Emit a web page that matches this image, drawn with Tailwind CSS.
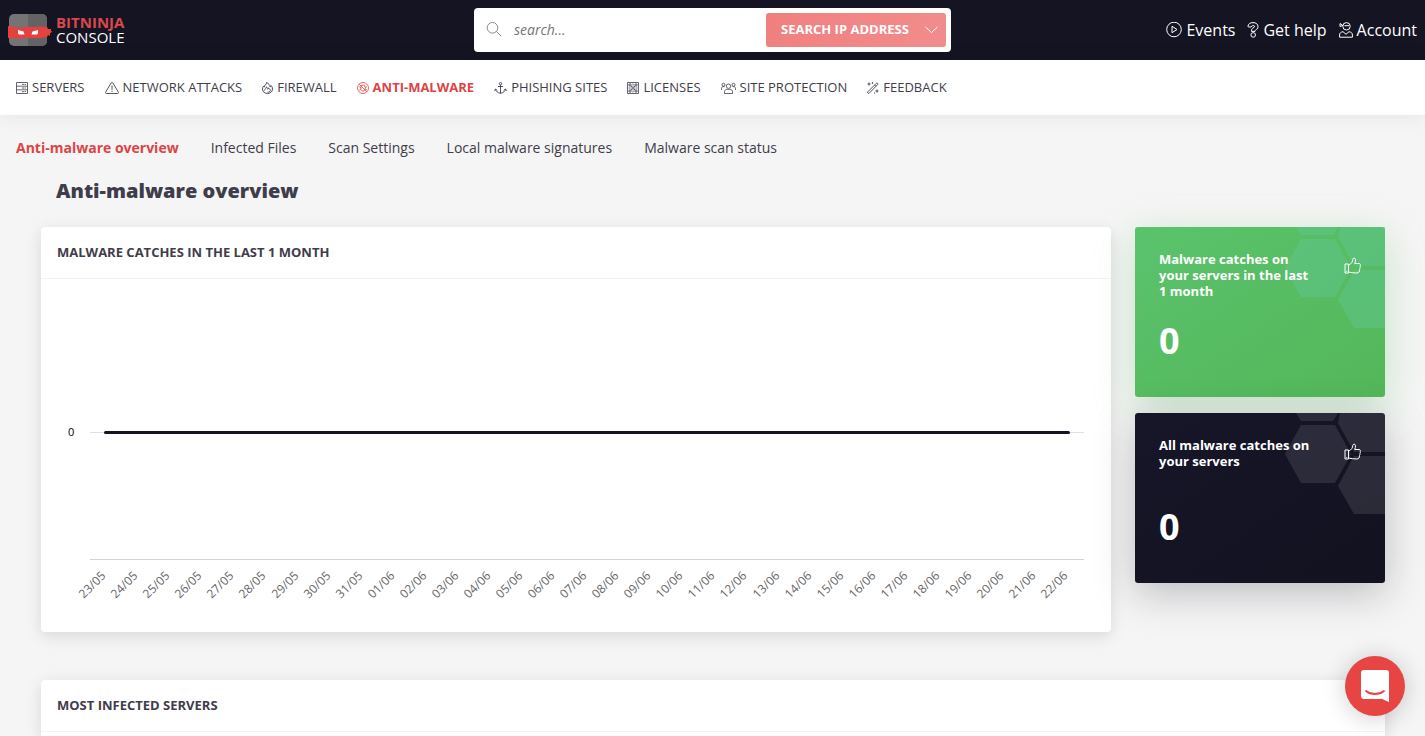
<!DOCTYPE html>
<html lang="en">
<head>
<meta charset="utf-8">
<meta name="viewport" content="width=device-width, initial-scale=1">
<title>BitNinja Console</title>
<script src="https://cdn.jsdelivr.net/npm/@tailwindcss/browser@4"></script>
</head>
<body class="min-h-screen overflow-x-hidden bg-[#f5f5f5] font-['Open_Sans','Noto_Sans',sans-serif] text-[#3f3d4b]">

<header class="grid h-15 grid-cols-[1fr_477px_1fr] items-center bg-[#151423] px-2">
  <a href="#" class="flex items-center gap-1 text-[15px] leading-[15px] text-white">
    <svg class="h-8 w-11 shrink-0" viewBox="0 0 44 32" aria-hidden="true">
      <rect x="1" width="38" height="32" rx="5" fill="#747474"/>
      <path d="M20 0h14a5 5 0 0 1 5 5v22a5 5 0 0 1-5 5H20z" fill="#636363"/>
      <path d="M0 12c7 1.500 13 1.500 19 1 7-.5 14-.5 20 0l1 2h3v2h1l-1 2h-1v3l-2-1-1 2c-7 1.500-12 1-19 1-7 .5-13 .5-20 0z" fill="#e5413f"/>
      <path d="M10 16l5.500 1.500 1 3H11l-1-1zM30 16l-5.500 1.500-1 3H29l1-1z" fill="#fff"/>
    </svg>
    <span><strong class="block font-bold text-[#d8484c]">BITNINJA</strong><span class="block">CONSOLE</span></span>
  </a>
  <form class="flex h-11 items-center rounded bg-white pr-[5px] pl-3" onsubmit="return false">
    <svg class="mr-3 size-4 shrink-0" viewBox="0 0 16 16" fill="none" stroke="#8a8a8a" aria-hidden="true"><circle cx="6.500" cy="5.800" r="5.300"/><path d="M10.500 9.500L15 14"/></svg>
    <input type="search" aria-label="Search" placeholder="search..." class="min-w-0 flex-1 bg-transparent text-sm italic outline-none placeholder:text-[#757575]">
    <button type="button" class="flex h-[34px] w-[180px] items-center justify-between rounded-[3px] bg-linear-to-r from-[#f08080] to-[#f28c8c] pr-2 pl-[15px] text-[13px] font-bold text-white">SEARCH IP ADDRESS
      <svg class="h-2 w-[13px]" viewBox="0 0 13 8" fill="none" stroke="currentColor" aria-hidden="true"><path d="M.5 1l6 5.500L12.500 1"/></svg>
    </button>
  </form>
  <nav aria-label="User" class="flex items-center justify-end gap-3 text-base text-white">
    <a href="#" class="flex items-center gap-1"><svg class="size-4" viewBox="0 0 16 16" fill="none" stroke="currentColor" aria-hidden="true"><circle cx="8" cy="7.500" r="7.300"/><path d="M6 4.300v6.400l5-3.200z" stroke-linejoin="round"/></svg>Events</a>
    <a href="#" class="flex items-center gap-1"><svg class="h-4 w-3" viewBox="0 0 12 16" fill="none" stroke="currentColor" aria-hidden="true"><path d="M1 4.500C1 2 3 .6 6 .6s5 1.500 5 4c0 2-1.500 3-2.500 3.600-.5.300-.5.800-.5 1.200H4.500c0-2 .5-2.900 1.600-3.500C7 5.400 7.600 5 7.600 4.400 7.600 3.300 4.400 3.200 4.200 5H2C1.300 5 1 4.900 1 4.500z"/><circle cx="6.200" cy="12.900" r="2.300"/></svg>Get help</a>
    <a href="#" class="flex items-center gap-1"><svg class="h-4 w-[14px]" viewBox="0 0 14 16" fill="none" stroke="currentColor" aria-hidden="true"><circle cx="7.500" cy="4.300" r="3.700"/><path d="M5.500 3.700h4.500M3.800 3.500L1 1.500v3l2.800-1"/><path d="M.6 15.200v-2.200c0-2 1.300-3 3.400-3.300l3 2.600 3-2.600c2.100.3 3.400 1.300 3.400 3.300v2.200z"/></svg>Account</a>
  </nav>
</header>

<nav aria-label="Main" class="flex h-[55px] items-center gap-5 bg-white px-4 text-[13px] whitespace-nowrap shadow-[0_0_20px_rgba(0,0,0,0.08)]">
  <a href="#" class="flex items-center gap-1"><svg class="h-3 w-3" viewBox="0 0 12 12" fill="none" stroke="currentColor" stroke-width=".8" aria-hidden="true"><path d="M.5.5h11v11H.5zM.5 4.200h11M.5 7.800h11M6 2.400h2.500M6 6h2.500M6 9.700h2.500M9.500 2v1M9.500 5.500v1M9.500 9v1"/></svg>SERVERS</a>
  <a href="#" class="flex items-center gap-1"><svg class="h-3 w-[14px]" viewBox="0 0 14 12" fill="none" stroke="currentColor" stroke-width=".9" stroke-linejoin="round" aria-hidden="true"><path d="M6.200.9L.6 10.200c-.3.600 0 1.300.7 1.300h11.400c.7 0 1-.7.700-1.300L7.800.9c-.4-.6-1.200-.6-1.600 0zM7 3.500v4.300M7 8.800v1.200"/></svg>NETWORK ATTACKS</a>
  <a href="#" class="flex items-center gap-1"><svg class="h-3 w-[11px]" viewBox="0 0 11 12" fill="none" stroke="currentColor" stroke-width=".9" stroke-linejoin="round" aria-hidden="true"><path d="M4.500.5C4.800 3 2 3 2.300 5 1.700 4.800 1.500 4.300 1.500 4 .8 5 .5 6 .5 7c0 2.700 2.200 4.500 5 4.500s5-1.800 5-4.500c0-1.500-.6-2.600-1.500-3.500 0 .8-.3 1.200-.8 1.500C8 3 6.500 1.500 4.500.5z"/><path d="M2.500 8.500C2.500 7 4.300 6.500 4.500 5c1.200.6 1.200 1.500 1.200 2.200.5-.2.700-.6.700-1.200 1.600 1 2 2 2 2.800-.6 1.200-1.500 1.500-2.900 1.500"/></svg>FIREWALL</a>
  <a href="#" aria-current="page" class="flex items-center gap-1 font-bold text-[#dc4446]"><svg class="h-3 w-3" viewBox="0 0 12 12" fill="none" stroke="currentColor" stroke-width=".8" aria-hidden="true"><circle cx="6" cy="6" r="5.500"/><path d="M2.200 2.200l7.600 7.600M4.500 3.200h3l.7 2v2L6.800 9H5.200L3.900 7.400V5.200zM2.200 4.800l1.700.8M2.200 8l1.700-.8M9.900 4.800l-1.700.8M9.900 8l-1.700-.8"/></svg>ANTI-MALWARE</a>
  <a href="#" class="flex items-center gap-1"><svg class="h-3 w-[13px]" viewBox="0 0 13 12" fill="none" stroke="currentColor" stroke-width=".9" aria-hidden="true"><circle cx="6.500" cy="1.700" r="1.200"/><path d="M6.500 3v8.300M4 4.500h5M.5 8.800L1.500 7l1.800 1.500M9.700 8.500L11.500 7l1 1.800M1.500 7.200c.3 2.300 2.300 3.300 5 4.200 2.700-.9 4.700-1.900 5-4.200"/></svg>PHISHING SITES</a>
  <a href="#" class="flex items-center gap-1"><svg class="h-3 w-3" viewBox="0 0 12 12" fill="none" stroke="currentColor" stroke-width=".8" aria-hidden="true"><path d="M.5.500h11v11H.5z"/><path d="M2 2h2v2H2zM8 2h2v2H8zM2 8h2v2H2zM5 5h2v2H5zM8 8h2v2H8zM4 4l1 1M7 7l1 1M8 4L7 5M5 7L4 8M6 1.500v2M6 8.500v2M1.500 6h2M8.500 6h2"/></svg>LICENSES</a>
  <a href="#" class="flex items-center gap-1"><svg class="h-3 w-[15px]" viewBox="0 0 15 12" fill="none" stroke="currentColor" stroke-width=".8" aria-hidden="true"><circle cx="7.500" cy="4.200" r="2.200"/><circle cx="2.500" cy="2.800" r="1.500"/><circle cx="12.500" cy="2.800" r="1.500"/><path d="M3.500 11.500v-1.700c0-1.600 1.300-2.400 2.500-2.600.8.500 2.200.5 3 0 1.200.2 2.500 1 2.500 2.600v1.700zM.5 8V6.500c0-1 .6-1.700 1.500-1.900h1.500M14.500 8V6.500c0-1-.6-1.700-1.500-1.900h-1.500"/></svg>SITE PROTECTION</a>
  <a href="#" class="flex items-center gap-1"><svg class="h-3 w-3" viewBox="0 0 12 12" fill="none" stroke="currentColor" stroke-width=".9" aria-hidden="true"><path d="M.8 9.800L9.400 1.200c.7-.7 2 .5 1.300 1.300L2.200 11.200c-.8.800-2.200-.6-1.400-1.400zM7.500 3l1.500 1.500M2 .5v3M.5 2h3M5.500.3v1.400M4.800 1h1.400M10 7.500v3M8.500 9h3M7.500 10.500v1"/></svg>FEEDBACK</a>
</nav>

<main>
  <nav aria-label="Anti-malware" class="flex items-center gap-8 px-4 pt-[23px] text-sm leading-5 whitespace-nowrap">
    <a href="#" aria-current="page" class="font-bold text-[#dc4446]">Anti-malware overview</a>
    <a href="#">Infected Files</a>
    <a href="#">Scan Settings</a>
    <a href="#">Local malware signatures</a>
    <a href="#">Malware scan status</a>
  </nav>
  <h1 class="mt-[19px] px-14 text-xl leading-7 font-extrabold">Anti-malware overview</h1>

  <div class="mt-[22px] grid grid-cols-[1fr_250px] items-start gap-6 px-10">
    <section class="ml-px rounded bg-white shadow-[0_4px_16px_rgba(0,0,0,0.12)]">
      <h2 class="border-b border-[#f3f3f3] px-4 py-4 text-[13px] leading-[19px] font-bold">MALWARE CATCHES IN THE LAST 1 MONTH</h2>
      <div class="flex h-[353px] gap-4 px-[27px] pt-[10px] text-[11px]">
        <div class="flex h-[270px] items-center pt-4 leading-4 text-black"><span class="w-[6px]">0</span></div>
        <div class="min-w-0 flex-1">
          <div class="flex h-[271px] items-center border-b border-[#cfd3d6] pt-4">
            <div class="flex h-px w-full items-center bg-[#e0e0e0] px-[14px]"><div class="h-[3px] w-full rounded-full bg-[#151423]"></div></div>
          </div>
          <div id="days" class="grid grid-cols-[repeat(31,minmax(0,1fr))] pt-2 text-[#666]"></div>
        </div>
      </div>
    </section>
    <div class="grid gap-4">
      <section class="relative h-[170px] rounded-[3px] bg-linear-to-br from-[#5ac36c] to-[#54b659] text-white shadow-[0_10px_40px_rgba(84,182,89,0.3)]">
        <svg class="absolute top-0 right-0 h-[102px] w-[100px]" viewBox="0 0 100 102" fill="#5fc58d" fill-opacity=".5" aria-hidden="true"><path d="M11 0h42l-5 8H16zM16 12h34l16 29-16 29H16L0 41zM55 0h45v39H69L53 10zM69 43h31v58H69L53 73z"/></svg>
        <div class="relative flex justify-between p-6">
          <div>
            <h2 class="h-12 w-[160px] text-[13px] leading-4 font-bold">Malware catches on<br>your servers in the last<br>1 month</h2>
            <p class="mt-[18px] text-4xl leading-12 font-bold">0</p>
          </div>
          <svg class="mt-[6px] h-[17px] w-[17px]" viewBox="0 0 17 17" fill="none" stroke="#fff" stroke-linejoin="round" aria-hidden="true"><path d="M1 7h3.500v9H1zM2.800 14v1M4.500 8.200C7.500 7 8.700 4.500 8.800 2.300 9 1 11.300.5 11.500 2.500c.2 1.500-.3 2.700-.8 4h4.600c1 0 1.300 1 .8 1.700.6.800.3 1.600-.2 2.100.4.800 0 1.700-.4 2.200.2 2-.8 3.500-2.500 3.500-3 0-5.500-.3-8.500-1z"/></svg>
        </div>
      </section>
      <section class="relative h-[170px] rounded-[3px] bg-linear-to-br from-[#171629] to-[#131220] text-white shadow-[0_10px_40px_rgba(21,20,35,0.25)]">
        <svg class="absolute top-0 right-0 h-[102px] w-[100px]" viewBox="0 0 100 102" fill="#fff" fill-opacity=".1" aria-hidden="true"><path d="M11 0h42l-5 8H16zM16 12h34l16 29-16 29H16L0 41zM55 0h45v39H69L53 10zM69 43h31v58H69L53 73z"/></svg>
        <div class="relative flex justify-between p-6">
          <div>
            <h2 class="h-12 w-[160px] text-[13px] leading-4 font-bold">All malware catches on<br>your servers</h2>
            <p class="mt-[18px] text-4xl leading-12 font-bold">0</p>
          </div>
          <svg class="mt-[6px] h-[17px] w-[17px]" viewBox="0 0 17 17" fill="none" stroke="#fff" stroke-linejoin="round" aria-hidden="true"><path d="M1 7h3.500v9H1zM2.800 14v1M4.500 8.200C7.500 7 8.700 4.500 8.800 2.300 9 1 11.300.5 11.500 2.500c.2 1.500-.3 2.700-.8 4h4.600c1 0 1.300 1 .8 1.700.6.800.3 1.600-.2 2.100.4.800 0 1.700-.4 2.200.2 2-.8 3.500-2.500 3.500-3 0-5.500-.3-8.500-1z"/></svg>
        </div>
      </section>
    </div>
  </div>

  <section class="mt-12 mr-10 ml-[41px] rounded-t bg-white pb-1 shadow-[0_4px_16px_rgba(0,0,0,0.12)]">
    <h2 class="border-b border-[#f3f3f3] px-4 py-4 text-[13px] leading-[19px] font-bold">MOST INFECTED SERVERS</h2>
  </section>
</main>

<button type="button" aria-label="Open chat" class="fixed right-5 bottom-5 flex size-15 items-center justify-center rounded-full bg-[#e74444] shadow-[0_2px_24px_rgba(0,0,0,0.2)]">
  <svg class="h-8 w-7" viewBox="0 0 28 32" aria-hidden="true"><path d="M3 0h22a3 3 0 0 1 3 3v29s-3-1-6.500-3H3a3 3 0 0 1-3-3V3a3 3 0 0 1 3-3z" fill="#fff"/><path d="M5 21c5 4 13 4 18 0" fill="none" stroke="#e74444" stroke-width="1.800" stroke-linecap="round"/></svg>
</button>

<script>
  const days = document.getElementById('days');
  const start = Date.UTC(2021, 4, 23);
  for (let i = 0; i < 31; i++) {
    const d = new Date(start + i * 86400000);
    const cell = document.createElement('div');
    cell.className = 'flex w-1/2 justify-end pr-2';
    const label = document.createElement('span');
    label.className = 'origin-top-right -rotate-45 text-xs leading-4';
    label.textContent = String(d.getUTCDate()).padStart(2, '0') + '/' + String(d.getUTCMonth() + 1).padStart(2, '0');
    cell.append(label);
    days.append(cell);
  }
</script>
</body>
</html>
